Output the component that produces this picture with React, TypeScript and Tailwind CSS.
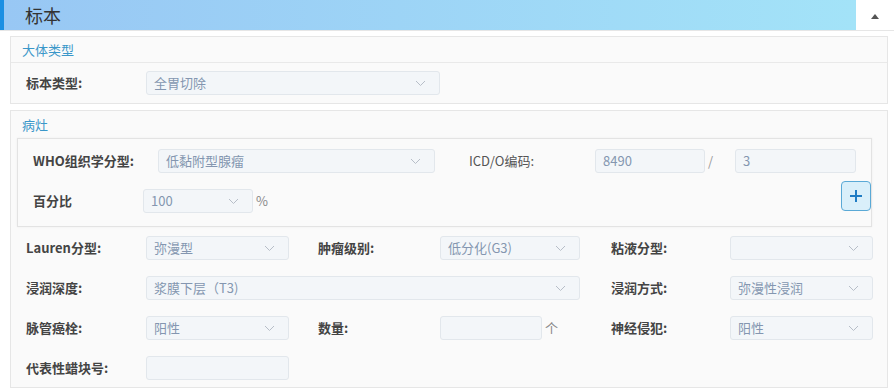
import React from "react";

const FONT = '"Noto Sans CJK SC", "Noto Sans", "Liberation Sans", sans-serif';

function Chevron() {
  return (
    <svg width="11" height="7" viewBox="0 0 11 7" className="shrink-0">
      <polyline points="1,1 5.5,5.5 10,1" fill="none" stroke="#b7bec8" strokeWidth="1" />
    </svg>
  );
}

function Field({ w, value, chevron = true }: { w: string; value?: string; chevron?: boolean }) {
  return (
    <div
      className={`${w} h-[24px] shrink-0 flex items-center justify-between pl-[7px] pr-[13px] rounded-[3px] border border-[#e2e7ec] bg-[#f3f6f9] text-[13px] text-[#8496b0]`}
    >
      <span className="whitespace-nowrap leading-[20px]">{value ?? ""}</span>
      {chevron && <Chevron />}
    </div>
  );
}

function Label({ w, children }: { w: string; children: React.ReactNode }) {
  return <div className={`${w} shrink-0 whitespace-nowrap text-[13px] font-bold text-[#444]`}>{children}</div>;
}

export default function App() {
  return (
    <div className="w-[894px] h-[391px] overflow-hidden bg-white" style={{ fontFamily: FONT }}>
      {/* header */}
      <div className="flex h-[31px] border-b border-[#e6e6e6]">
        <div className="w-[4px] bg-[#1b8fe3]" />
        <div className="flex-1 flex items-center pl-[21px] bg-gradient-to-r from-[#98c7f4] to-[#a3e3f8] text-[18px] text-[#333]">
          标本
        </div>
        <div className="w-[38px] flex items-center justify-center bg-white">
          <svg width="8" height="5" viewBox="0 0 8 5" className="mt-[2px]">
            <polygon points="0,5 4,0 8,5" fill="#555" />
          </svg>
        </div>
      </div>

      <div className="ml-[10px] w-[878px]">
        {/* section 1 */}
        <div className="mt-[5px] border border-[#e6e6e6] bg-[#fafafa]">
          <div className="h-[26px] flex items-center pl-[11px] border-b border-[#e9e9e9] text-[13px] text-[#3a97c9]">
            大体类型
          </div>
          <div className="h-[40px] flex items-center pl-[15px]">
            <Label w="w-[120px]">标本类型:</Label>
            <Field w="w-[294px]" value="全胃切除" />
          </div>
        </div>

        {/* section 2 */}
        <div className="mt-[6px] border border-[#e6e6e6] bg-[#fafafa] pb-[7px]">
          <div className="h-[27px] flex items-center pl-[11px] text-[13px] text-[#3a97c9]">病灶</div>

          <div className="ml-[6px] mr-[15px] border border-[#e3e3e3] bg-[#fafafa] shadow-[0_0_2px_rgba(0,0,0,0.06)] pt-[10px] pb-[13px] pl-[15px]">
            <div className="flex items-center h-[24px]">
              <Label w="w-[125px]">WHO组织学分型:</Label>
              <Field w="w-[277px]" value="低黏附型腺瘤" />
              <div className="w-[34px] shrink-0" />
              <div className="w-[126px] shrink-0 whitespace-nowrap text-[13px] text-[#555]">ICD/O编码:</div>
              <Field w="w-[110px]" value="8490" chevron={false} />
              <div className="w-[30px] shrink-0 pl-[3px] text-[13px] text-[#999]">/</div>
              <Field w="w-[121px]" value="3" chevron={false} />
            </div>
            <div className="flex items-start mt-[8px]">
              <div className="flex items-center h-[24px] mt-[8px]">
                <Label w="w-[110px]">百分比</Label>
                <Field w="w-[110px]" value="100" />
                <span className="ml-[3px] text-[13px] text-[#888]">%</span>
              </div>
              <button className="ml-auto w-[30px] h-[30px] rounded-[4px] border border-[#5aa9d6] bg-[#d9effa] flex items-center justify-center">
                <svg width="14" height="14" viewBox="0 0 14 14">
                  <path d="M7 1v12M1 7h12" stroke="#1f7cc4" strokeWidth="2" />
                </svg>
              </button>
            </div>
          </div>

          <div className="pl-[15px] mt-[9px] flex flex-col gap-[16px]">
            <div className="flex items-center h-[24px]">
              <Label w="w-[120px]">Lauren分型:</Label>
              <Field w="w-[143px]" value="弥漫型" />
              <div className="w-[29px] shrink-0" />
              <Label w="w-[122px]">肿瘤级别:</Label>
              <Field w="w-[140px]" value="低分化(G3)" />
              <div className="w-[31px] shrink-0" />
              <Label w="w-[119px]">粘液分型:</Label>
              <Field w="w-[143px]" />
            </div>
            <div className="flex items-center h-[24px]">
              <Label w="w-[120px]">浸润深度:</Label>
              <Field w="w-[434px]" value="浆膜下层（T3)" />
              <div className="w-[31px] shrink-0" />
              <Label w="w-[119px]">浸润方式:</Label>
              <Field w="w-[143px]" value="弥漫性浸润" />
            </div>
            <div className="flex items-center h-[24px]">
              <Label w="w-[120px]">脉管癌栓:</Label>
              <Field w="w-[143px]" value="阳性" />
              <div className="w-[29px] shrink-0" />
              <Label w="w-[122px]">数量:</Label>
              <Field w="w-[102px]" chevron={false} />
              <div className="w-[38px] shrink-0 pl-[3px] text-[13px] text-[#888]">个</div>
              <div className="w-[31px] shrink-0" />
              <Label w="w-[119px]">神经侵犯:</Label>
              <Field w="w-[143px]" value="阳性" />
            </div>
            <div className="flex items-center h-[24px]">
              <Label w="w-[120px]">代表性蜡块号:</Label>
              <Field w="w-[143px]" chevron={false} />
            </div>
          </div>
        </div>
      </div>
    </div>
  );
}
